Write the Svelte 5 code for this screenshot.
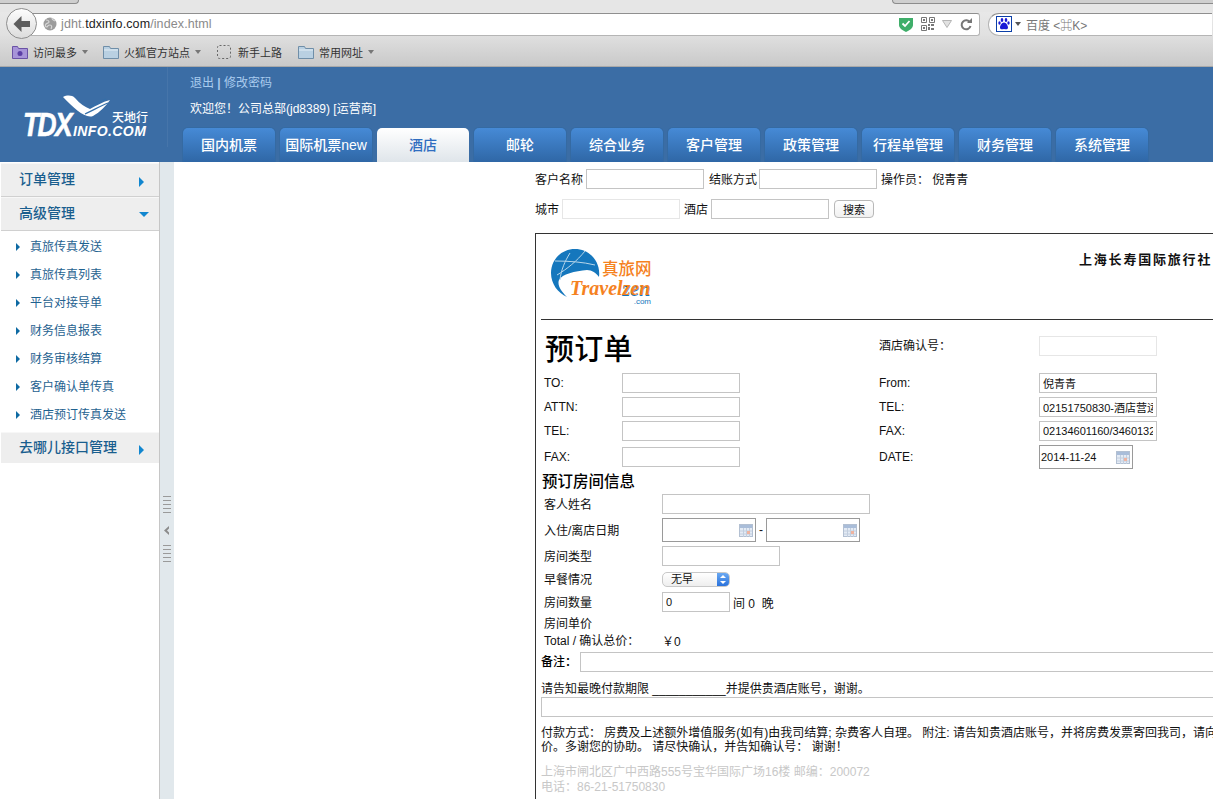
<script lang="ts">
  const bookmarks = [
    { label: "访问最多", icon: "smart", caret: true },
    { label: "火狐官方站点", icon: "folder", caret: true },
    { label: "新手上路", icon: "dash", caret: false },
    { label: "常用网址", icon: "folder", caret: true },
  ];
  const tabs = ["国内机票", "国际机票new", "酒店", "邮轮", "综合业务", "客户管理", "政策管理", "行程单管理", "财务管理", "系统管理"];
  const subItems = ["真旅传真发送", "真旅传真列表", "平台对接导单", "财务信息报表", "财务审核结算", "客户确认单传真", "酒店预订传真发送"];
  const contacts = ["TO:", "ATTN:", "TEL:", "FAX:"];
</script>

{#snippet calendar()}
  <svg class="cal" width="14" height="13" viewBox="0 0 14 13">
    <rect x="0.500" y="0.500" width="13" height="12" fill="#e4ebf5" stroke="#b3c0d2" />
    <rect x="1" y="1" width="12" height="3" fill="#a9bdd9" />
    <path d="M1 7h12M1 10h12M4.500 4v9M7.500 4v9M10.500 4v9" stroke="#c2cede" fill="none" />
    <rect x="8" y="7" width="3" height="3" fill="#eeb3a0" />
  </svg>
{/snippet}

<div class="page">
  <div class="tabstrip">
    <div class="strip-tab first"></div>
    <div class="strip-tab second"></div>
  </div>

  <div class="toolbar">
    <div class="back">
      <svg width="20" height="18" viewBox="0 0 20 18">
        <path d="M9.500 1 1.500 9l8 8v-5H18V6H9.500z" fill="#5d5d5d" />
      </svg>
    </div>
    <div class="urlbar">
      <svg class="globe" width="14" height="14" viewBox="0 0 14 14">
        <circle cx="7" cy="7" r="6.500" fill="#9c9c9c" />
        <path d="M3 3c2 0 3 1 3 2S4 6 3 7 2 10 4 10c1-1 1-2 3-2s2 2 1 4M9 1c0 2 1 2 3 3" stroke="#d6d6d6" stroke-width="1.200" fill="none" />
      </svg>
      <span class="url"><span class="dim">jdht.</span>tdxinfo.com<span class="dim">/index.html</span></span>
      <div class="url-icons">
        <svg width="14" height="15" viewBox="0 0 14 15">
          <path d="M0 1h14v7c0 3-3 5-7 7-4-2-7-4-7-7z" fill="#3fae6a" />
          <path d="M3.500 6.500 6 9l4.500-5" stroke="#fff" stroke-width="1.800" fill="none" />
        </svg>
        <svg width="14" height="14" viewBox="0 0 14 14">
          <path d="M.5.500h5v5h-5zM8.500.500h5v5h-5zM.5 8.500h5v5h-5z" fill="none" stroke="#777" />
          <path d="M2 2h2v2H2zM10 2h2v2h-2zM2 10h2v2H2zM7 7h2v2H7zM10 7h3v2h-3zM7 10h2v3H7zM10 11h3v2h-3z" fill="#777" />
        </svg>
        <svg width="10" height="8" viewBox="0 0 10 8">
          <path d="M.5.500h9L5 7.500z" fill="#e2e2e2" stroke="#b5b5b5" />
        </svg>
        <svg width="12" height="13" viewBox="0 0 12 13">
          <path d="M10 4.500A4.500 4.500 0 1 0 10.500 8" fill="none" stroke="#777" stroke-width="2" />
          <path d="M7 5h5V0z" fill="#777" />
        </svg>
      </div>
    </div>
    <div class="searchbar">
      <svg width="16" height="16" viewBox="0 0 16 16">
        <rect x="0.500" y="0.500" width="15" height="15" fill="#fff" stroke="#0b3fa8" />
        <g fill="#1a1ad6">
          <ellipse cx="6" cy="4" rx="1.300" ry="2" />
          <ellipse cx="10" cy="4" rx="1.300" ry="2" />
          <ellipse cx="3.500" cy="7" rx="1.200" ry="1.800" />
          <ellipse cx="12.500" cy="7" rx="1.200" ry="1.800" />
          <path d="M8 6.500c2 0 4 3 4 5s-2 2-4 1.500c-2 .5-4 .5-4-1.500s2-5 4-5z" />
        </g>
      </svg>
      <span class="mini-caret"></span>
      <span class="search-hint">百度 &lt;⌘K&gt;</span>
    </div>
  </div>

  <div class="bookmarks">
    {#each bookmarks as b}
      <div class="bookmark" class:plain={!b.caret}>
        {#if b.icon === "smart"}
          <svg width="16" height="14" viewBox="0 0 16 14">
            <path d="M.5 13.500V1.500h5l1 2h9v10z" fill="#a794d8" stroke="#6a52a5" />
            <circle cx="8" cy="8.500" r="2.500" fill="#5b3fa5" />
          </svg>
        {:else if b.icon === "folder"}
          <svg width="16" height="14" viewBox="0 0 16 14">
            <path d="M.5 13.500V1.500h6l1 2h8v10z" fill="#b9d0e2" stroke="#6f8ea8" />
            <path d="M1 5h14" stroke="#e4eef5" />
          </svg>
        {:else}
          <svg width="14" height="14" viewBox="0 0 14 14">
            <rect x="0.500" y="0.500" width="13" height="13" rx="2" fill="none" stroke="#666" stroke-dasharray="2 2" />
          </svg>
        {/if}
        <span>{b.label}</span>
        {#if b.caret}<span class="mini-caret gray"></span>{/if}
      </div>
    {/each}
  </div>

  <header class="top">
    <div class="logo">
      <svg class="swoosh" width="54" height="28" viewBox="0 0 54 28">
        <path d="M3 3C7 1 12 1 15 4c5 6 10 9 15 11 6-3 12-7 20-9-4 6-10 12-17 16C25 25 14 14 3 3z" fill="#fff" />
        <path d="M25 20C32 17 40 12 48 9M30 13c5-3 11-6 16-8" stroke="#356fa9" stroke-width="1.300" fill="none" />
      </svg>
      <span class="logo-cn">天地行</span>
      <div class="logo-text"><span class="tdx">TDX</span><span class="info">INFO.COM</span></div>
    </div>
    <div class="top-main">
      <div class="user-links"><a href="#top">退出</a> <b>|</b> <a href="#top">修改密码</a></div>
      <div class="welcome">欢迎您！公司总部(jd8389) [运营商]</div>
      <nav class="tabs">
        {#each tabs as t}
          <div class="tab" class:active={t === "酒店"}>{t}</div>
        {/each}
      </nav>
    </div>
  </header>

  <div class="body">
    <aside class="side">
      <div class="side-head">订单管理<span class="arrow-right"></span></div>
      <div class="side-head">高级管理<span class="arrow-down"></span></div>
      <ul class="side-list">
        {#each subItems as s}
          <li>{s}</li>
        {/each}
      </ul>
      <div class="side-head last">去哪儿接口管理<span class="arrow-right"></span></div>
    </aside>

    <div class="splitter">
      <div class="grip">
        {#each [0, 1, 2, 3, 4] as _}<i></i>{/each}
      </div>
      <svg class="collapse" width="6" height="9" viewBox="0 0 6 9"><path d="M5 0v9L0 4.500z" fill="#8b8b8b" /><path d="M5.500 2v5L3 4.500z" fill="#e1e8ec" /></svg>
      <div class="grip">
        {#each [0, 1, 2, 3, 4] as _}<i></i>{/each}
      </div>
    </div>

    <main class="content">
      <div class="filter">
        <label>客户名称</label><input class="w118" />
        <label class="snug">结账方式</label><input class="w118" />
        <label>操作员： 倪青青</label>
      </div>
      <div class="filter second-filter">
        <label>城市</label><input class="w118 pale" />
        <label>酒店</label><input class="w118" />
        <button>搜索</button>
      </div>

      <section class="sheet">
        <div class="sheet-head">
          <svg class="zen-globe" width="50" height="50" viewBox="0 0 50 50">
            <path d="M48 28C50 12 38 0 24 0 10 0 0 11 0 24c0 11 7 20 16 24-6-6-10-12-8-17 3-6 16-9 28-10 5 0 9 3 12 7z" fill="#1577bd" />
            <path d="M19 4C14 12 10 21 9 31M4 12c14 0 28 1 40 4M34 2C26 12 16 20 6 26" stroke="#b7d6ea" stroke-width="1" fill="none" />
          </svg>
          <div class="zen-words">
            <span class="zen-cn">真旅网</span>
            <span class="zen-en">Travel<span class="zen-tail">zen</span></span>
            <span class="zen-com">.com</span>
          </div>
          <div class="agency">上海长寿国际旅行社</div>
        </div>

        <div class="columns">
          <div class="col-left">
            <h1>预订单</h1>
            {#each contacts as c, i}
              <div class="row" class:fax={i === 3}><span class="lab-s">{c}</span><input class="w118" /></div>
            {/each}
          </div>
          <div class="col-right">
            <div class="row confirm"><span class="lab-r">酒店确认号：</span><input class="w118 pale" /></div>
            <div class="row"><span class="lab-r">From:</span><input class="w118" value="倪青青" /></div>
            <div class="row"><span class="lab-r">TEL:</span><input class="w118" value="02151750830-酒店营运部" /></div>
            <div class="row"><span class="lab-r">FAX:</span><input class="w118" value="02134601160/34601321" /></div>
            <div class="row fax"><span class="lab-r">DATE:</span>
              <div class="date-box w94"><span>2014-11-24</span>{@render calendar()}</div>
            </div>
          </div>
        </div>

        <h2>预订房间信息</h2>
        <div class="room">
          <div class="room-row h24"><span class="lab-m">客人姓名</span><input class="w208" /></div>
          <div class="room-row h28"><span class="lab-m">入住/离店日期</span>
            <div class="date-box w94">{@render calendar()}</div>
            <span class="dash">-</span>
            <div class="date-box w94">{@render calendar()}</div>
          </div>
          <div class="room-row h24"><span class="lab-m">房间类型</span><input class="w118" /></div>
          <div class="room-row h22"><span class="lab-m">早餐情况</span>
            <div class="select"><span>无早</span><i class="spin"></i></div>
          </div>
          <div class="room-row h24"><span class="lab-m">房间数量</span><input class="w68" value="0" /><span class="after">间 0&nbsp; 晚</span></div>
          <div class="room-row h19"><span class="lab-m">房间单价</span></div>
          <div class="room-row h15"><span class="lab-m">Total / 确认总价：</span><span>￥0</span></div>
        </div>

        <div class="remark"><b>备注：</b><input /></div>
        <p class="deadline">请告知最晚付款期限 ___________并提供贵酒店账号，谢谢。</p>
        <input class="wide" />
        <p class="terms">付款方式： 房费及上述额外增值服务(如有)由我司结算; 杂费客人自理。 附注: 请告知贵酒店账号，并将房费发票寄回我司，请向<br />价。多谢您的协助。 请尽快确认，并告知确认号： 谢谢！</p>
        <p class="address">上海市闸北区广中西路555号宝华国际广场16楼 邮编：200072<br />电话：86-21-51750830</p>
      </section>
    </main>
  </div>
</div>

<style>
  :global(body) {
    margin: 0;
    background: #fff;
    overflow: hidden;
  }

  .page {
    width: 1213px;
    height: 799px;
    overflow: hidden;
    font-family: "Liberation Sans", "Noto Sans CJK SC", sans-serif;
    font-size: 12px;
    color: #111;
  }

  .tabstrip {
    height: 12px;
    box-sizing: border-box;
    background: #e6e6e6;
    display: flex;
    justify-content: space-between;
  }

  .strip-tab {
    height: 3px;
    background: #cfcfcf;
    border-bottom: 1px solid #8c8c8c;
  }

  .strip-tab.first {
    width: 78px;
    border-right: 1px solid #8c8c8c;
    border-radius: 0 0 6px 0;
  }

  .strip-tab.second {
    width: 320px;
    border-left: 1px solid #8c8c8c;
    border-radius: 0 0 0 6px;
  }

  .toolbar {
    height: 24px;
    background: linear-gradient(#e8e8e8, #e0e0e0);
    display: flex;
    align-items: center;
    position: relative;
    padding-left: 31px;
  }

  .back {
    position: absolute;
    left: 6px;
    top: -4px;
    width: 31px;
    height: 31px;
    box-sizing: border-box;
    border: 1px solid #8e8e8e;
    border-radius: 50%;
    background: linear-gradient(#fdfdfd, #dcdcdc);
    display: flex;
    align-items: center;
    justify-content: center;
  }

  .urlbar {
    width: 949px;
    height: 23px;
    box-sizing: border-box;
    border: 1px solid #b5b5b5;
    border-top-color: #8f8f8f;
    border-left: 0;
    border-radius: 0 3px 3px 0;
    background: #fff;
    display: flex;
    align-items: center;
    padding-left: 12px;
    font-size: 12.500px;
    letter-spacing: 0.1px;
  }

  .url {
    margin-left: 4px;
    color: #222;
  }

  .dim {
    color: #8a8a8a;
  }

  .url-icons {
    margin-left: auto;
    width: 73px;
    display: flex;
    align-items: center;
    justify-content: space-between;
    padding-right: 7px;
  }

  .searchbar {
    width: 224px;
    height: 23px;
    box-sizing: border-box;
    margin-left: 8px;
    border: 1px solid #b5b5b5;
    border-top-color: #8f8f8f;
    border-right: 0;
    border-radius: 11px 0 0 11px;
    background: #fff;
    display: flex;
    align-items: center;
    padding-left: 7px;
    gap: 3px;
  }

  .search-hint {
    margin-left: 2px;
    color: #777;
  }

  .mini-caret {
    width: 0;
    height: 0;
    border: 3.500px solid transparent;
    border-top: 4px solid #555;
    border-bottom: 0;
  }

  .mini-caret.gray {
    border-top-color: #777;
  }

  .bookmarks {
    height: 31px;
    box-sizing: border-box;
    background: linear-gradient(#dfdfdf, #c9c9c9);
    border-bottom: 1px solid #a9a9a9;
    display: flex;
    align-items: center;
    padding: 1px 0 0 12px;
    gap: 15px;
    color: #333;
    font-size: 11px;
  }

  .bookmark {
    display: flex;
    align-items: center;
    gap: 5px;
  }

  .bookmark.plain {
    margin-left: 1px;
    margin-right: 1px;
    gap: 7px;
  }

  .top {
    height: 95px;
    background: #3b6da5;
    display: flex;
  }

  .logo {
    width: 168px;
    flex: none;
    box-sizing: border-box;
    border-right: 1px solid #4675aa;
    margin-bottom: 15px;
    position: relative;
    color: #fff;
  }

  .swoosh {
    position: absolute;
    left: 60px;
    top: 27px;
  }

  .logo-cn {
    position: absolute;
    left: 112px;
    top: 41px;
    font-size: 12px;
    font-weight: 500;
  }

  .logo-text {
    position: absolute;
    left: 23px;
    top: 39px;
    font-weight: 700;
    font-style: italic;
    white-space: nowrap;
    display: flex;
    align-items: baseline;
  }

  .tdx {
    display: inline-block;
    width: 50px;
    font-size: 33px;
    letter-spacing: -2px;
    transform: scaleX(0.8);
    transform-origin: left;
    -webkit-text-stroke: 0.6px #fff;
  }

  .info {
    font-size: 14px;
    letter-spacing: 0.4px;
  }

  .top-main {
    flex: 1;
    display: flex;
    flex-direction: column;
    padding-left: 22px;
  }

  .user-links {
    padding-top: 7px;
    height: 17px;
    line-height: 19px;
    color: #a9cbee;
  }

  .user-links a {
    color: #a9cbee;
    text-decoration: none;
  }

  .welcome {
    margin-top: 9px;
    height: 17px;
    line-height: 19px;
    color: #fff;
  }

  .tabs {
    margin-top: 11px;
    margin-left: -7px;
    display: flex;
    gap: 5px;
  }

  .tab {
    width: 92px;
    height: 34px;
    box-sizing: border-box;
    padding-top: 3px;
    border-radius: 5px 5px 0 0;
    background: linear-gradient(#468ad6, #2f67a6);
    box-shadow: 0 0 0 1px #356aa2;
    color: #fff;
    font-size: 14px;
    font-weight: 500;
    line-height: 28px;
    text-align: center;
    white-space: nowrap;
  }

  .tab.active {
    background: linear-gradient(#fff, #dfe5ea);
    color: #2f6dc0;
    box-shadow: none;
  }

  .body {
    display: flex;
    height: 637px;
  }

  .side {
    width: 160px;
    flex: none;
    box-sizing: border-box;
    padding: 1px 0 0 1px;
    border-right: 1px solid #c6c6c6;
    background: #fff;
  }

  .side-head {
    height: 34px;
    box-sizing: border-box;
    padding: 0 15px 5px 18px;
    background: #eeeeee;
    border-bottom: 1px solid #d0d0d0;
    border-top: 1px solid #f7f7f7;
    color: #1a5e8e;
    font-size: 14px;
    font-weight: 500;
    display: flex;
    align-items: center;
    justify-content: space-between;
  }

  .side-head.last {
    height: 31px;
    border-bottom: 0;
  }

  .arrow-right {
    width: 0;
    height: 0;
    margin-top: 9px;
    border-left: 5px solid #1186cf;
    border-top: 5px solid transparent;
    border-bottom: 5px solid transparent;
  }

  .arrow-down {
    width: 0;
    height: 0;
    margin-top: 5px;
    margin-right: -5px;
    border-top: 5px solid #1186cf;
    border-left: 5px solid transparent;
    border-right: 5px solid transparent;
  }

  .side-list {
    list-style: none;
    margin: 0;
    padding: 2px 0 3px;
  }

  .side-list li {
    height: 28px;
    line-height: 28px;
    padding-left: 29px;
    position: relative;
    color: #1f6290;
  }

  .side-list li::before {
    content: "";
    position: absolute;
    left: 15px;
    top: 10px;
    border-left: 4px solid #0e6aa3;
    border-top: 4px solid transparent;
    border-bottom: 4px solid transparent;
  }

  .splitter {
    width: 14px;
    flex: none;
    background: #e1e8ec;
    display: flex;
    flex-direction: column;
    align-items: center;
    padding-top: 334px;
    box-sizing: border-box;
  }

  .collapse {
    margin: 13px 0 10px;
  }

  .grip {
    display: flex;
    flex-direction: column;
    gap: 3px;
  }

  .grip i {
    display: block;
    width: 8px;
    height: 1px;
    background: #9a9a9a;
  }

  .content {
    flex: 1;
    min-width: 0;
    padding: 7px 0 0 361px;
    background: #fff;
  }

  .filter {
    display: flex;
    align-items: center;
    height: 20px;
    gap: 3px;
    white-space: nowrap;
  }

  .filter label {
    padding-bottom: 2px;
  }

  .filter input + label {
    margin-left: 1px;
  }

  .filter input + label.snug {
    margin-left: 2px;
    margin-right: -1px;
  }

  .second-filter {
    margin-top: 10px;
  }

  input {
    box-sizing: border-box;
    height: 20px;
    border: 1px solid #c4c4c4;
    padding: 0 3px;
    margin: 0;
    background: #fff;
    font: inherit;
    font-size: 11px;
    color: #111;
    outline: 0;
  }

  .w118 {
    width: 118px;
  }

  .w208 {
    width: 208px;
  }

  .w68 {
    width: 68px;
  }

  .pale {
    border-color: #e6e6e6;
  }

  button {
    width: 40px;
    height: 18px;
    margin: 0 0 1px 2px;
    padding: 0;
    box-sizing: border-box;
    border: 1px solid #b8b8b8;
    border-radius: 4px;
    background: linear-gradient(#fff, #f1f1f1);
    font: inherit;
    font-size: 11px;
    color: #111;
  }

  .sheet {
    margin-top: 14px;
    width: 800px;
    height: 600px;
    box-sizing: border-box;
    border: 1px solid #333;
    border-right: 0;
    border-bottom: 0;
    padding-left: 5px;
    white-space: nowrap;
  }

  .sheet-head {
    height: 86px;
    box-sizing: border-box;
    border-bottom: 1px solid #333;
    padding: 15px 0 0 10px;
    display: flex;
    align-items: flex-start;
  }

  .zen-globe {
    flex: none;
  }

  .zen-words {
    width: 52px;
    margin-left: -1px;
    position: relative;
    height: 56px;
    color: #f5821f;
  }

  .zen-cn {
    position: absolute;
    top: 11px;
    left: 2px;
    font-size: 16.500px;
    line-height: 18px;
    font-weight: 500;
    white-space: nowrap;
  }

  .zen-en {
    position: absolute;
    left: -30px;
    top: 30px;
    font-family: "Liberation Serif", serif;
    font-style: italic;
    font-weight: 700;
    font-size: 20px;
    line-height: 18px;
    white-space: nowrap;
  }

  .zen-tail {
    text-shadow: 0 1px 0 #1577bd;
  }

  .zen-com {
    position: absolute;
    right: 1px;
    top: 49px;
    font-size: 8px;
    line-height: 8px;
    color: #1577bd;
  }

  .agency {
    margin-left: 427px;
    font-size: 13px;
    font-weight: 700;
    letter-spacing: 1.800px;
    white-space: nowrap;
  }

  .columns {
    display: flex;
    height: 152px;
  }

  .col-left {
    width: 338px;
    flex: none;
    box-sizing: border-box;
    padding-left: 3px;
  }

  h1 {
    margin: 0;
    height: 51px;
    padding-left: 1px;
    font-size: 29px;
    letter-spacing: 0.3px;
    line-height: 60px;
    font-weight: 500;
    color: #000;
  }

  .row {
    height: 24px;
    display: flex;
    align-items: center;
  }

  .row.fax {
    margin-top: 2px;
  }

  .row.confirm {
    height: 51px;
    align-items: flex-start;
    padding-top: 16px;
    box-sizing: border-box;
    line-height: 20px;
  }

  .lab-s {
    width: 78px;
    flex: none;
  }

  .lab-r {
    width: 160px;
    flex: none;
  }

  .date-box {
    box-sizing: border-box;
    height: 24px;
    border: 1px solid #9a9a9a;
    display: flex;
    align-items: center;
    padding: 0 2px 0 1px;
    font-size: 11px;
    white-space: nowrap;
  }

  .date-box .cal {
    margin-left: auto;
  }

  .w94 {
    width: 94px;
  }

  h2 {
    margin: 0;
    height: 20px;
    padding-left: 1px;
    font-size: 15.500px;
    line-height: 19px;
    font-weight: 500;
    color: #000;
  }

  .room {
    padding-left: 3px;
  }

  .room-row {
    display: flex;
    align-items: center;
    white-space: nowrap;
  }

  .room-row .lab-m {
    padding-bottom: 2px;
  }

  .h24 {
    height: 24px;
  }

  .h28 {
    height: 28px;
  }

  .h22 {
    height: 22px;
  }

  .h19 {
    height: 19px;
  }

  .h15 {
    height: 15px;
  }

  .lab-m {
    width: 118px;
    flex: none;
  }

  .dash {
    width: 10px;
    text-align: center;
  }

  .after {
    margin-left: 3px;
  }

  .select {
    width: 68px;
    height: 15px;
    box-sizing: border-box;
    border: 1px solid #c8c8c8;
    border-radius: 5px;
    padding-left: 8px;
    font-size: 11px;
    line-height: 13px;
    position: relative;
    overflow: hidden;
    background: linear-gradient(#fff, #eee);
  }

  .spin {
    position: absolute;
    right: 0;
    top: 0;
    width: 12px;
    height: 13px;
    background: linear-gradient(#6aa9f2, #2a72dc);
  }

  .spin::before,
  .spin::after {
    content: "";
    position: absolute;
    left: 3px;
    border-left: 3px solid transparent;
    border-right: 3px solid transparent;
  }

  .spin::before {
    top: 2px;
    border-bottom: 3px solid #fff;
  }

  .spin::after {
    bottom: 2px;
    border-top: 3px solid #fff;
  }

  .remark {
    margin-top: 4px;
    height: 20px;
    display: flex;
    align-items: center;
    color: #000;
  }

  .remark b {
    width: 39px;
    flex: none;
    padding-bottom: 3px;
    font-weight: 500;
  }

  .remark input {
    flex: 1;
  }

  p {
    margin: 0;
  }

  .deadline {
    margin-top: 10px;
    line-height: 15px;
  }

  .wide {
    display: block;
    width: 100%;
  }

  .terms {
    margin-top: 9px;
    line-height: 14px;
  }

  .address {
    margin-top: 11px;
    line-height: 15px;
    color: #c8c8c8;
  }
</style>
